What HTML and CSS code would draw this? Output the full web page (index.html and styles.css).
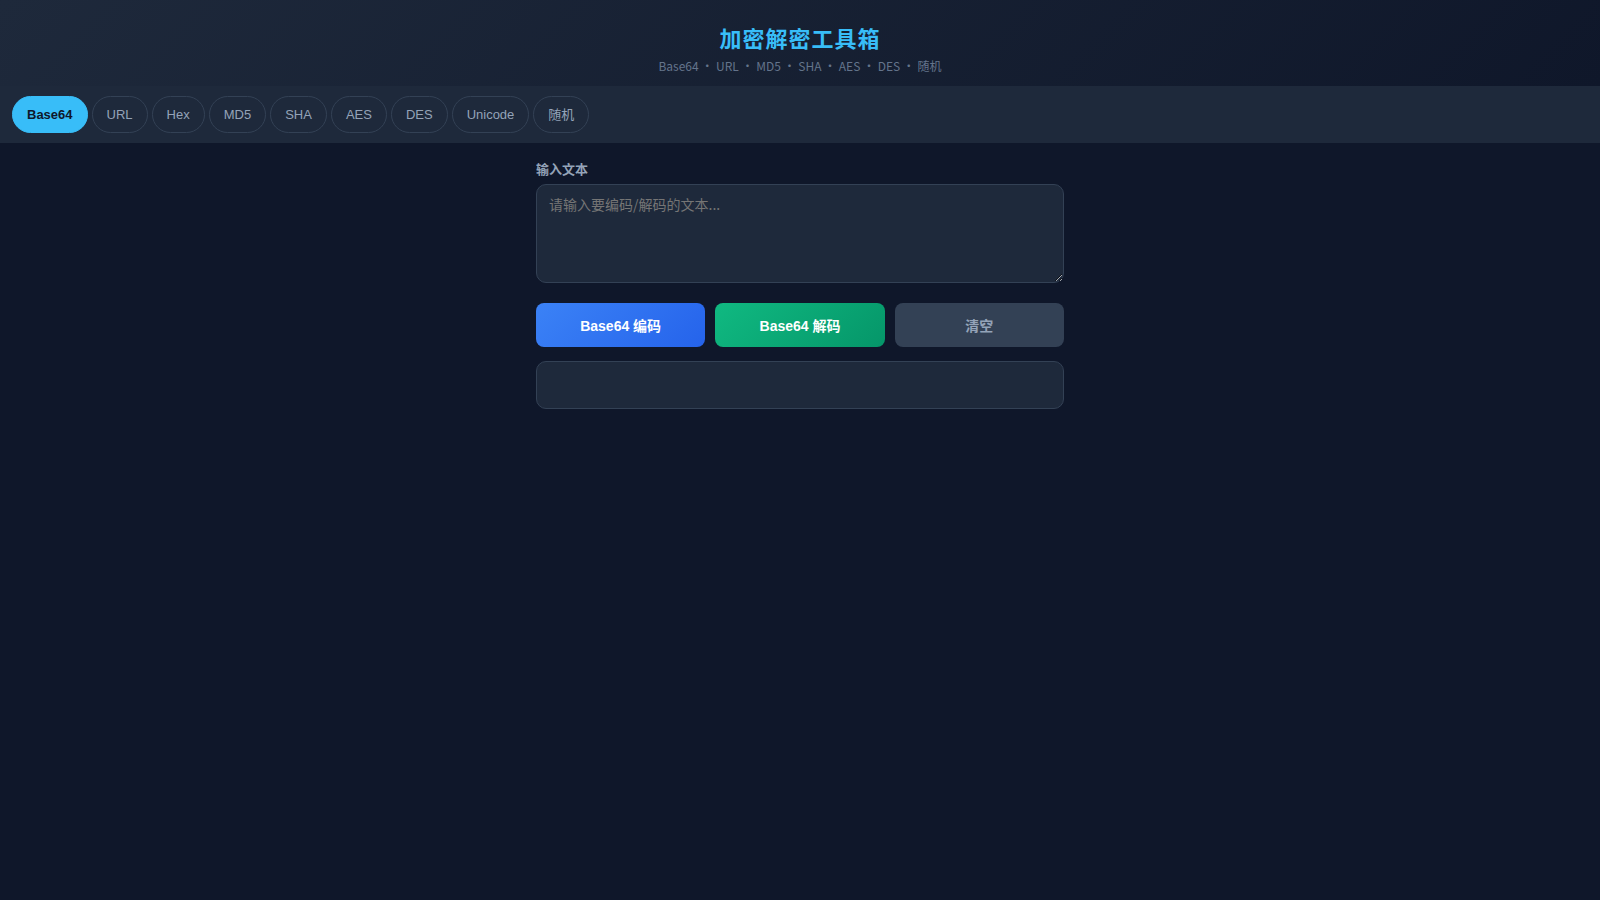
FILE: index.html
```html
<!DOCTYPE html>
<html lang="zh-CN">
<head>
  <meta charset="UTF-8">
  <title>加密解密工具箱</title>
  <meta name="viewport" content="width=device-width, initial-scale=1.0">
  <link rel="stylesheet" href="styles.css">
</head>
<body>
  <header>
    <h1>加密解密工具箱</h1>
    <p class="subtitle">Base64 · URL · MD5 · SHA · AES · DES · 随机</p>
  </header>
  <nav class="tabs">
    <button class="tab active">Base64</button>
    <button class="tab">URL</button>
    <button class="tab">Hex</button>
    <button class="tab">MD5</button>
    <button class="tab">SHA</button>
    <button class="tab">AES</button>
    <button class="tab">DES</button>
    <button class="tab">Unicode</button>
    <button class="tab">随机</button>
  </nav>
  <main>
    <div class="panel">
      <label class="field-label" for="input">输入文本</label>
      <textarea id="input" placeholder="请输入要编码/解码的文本..."></textarea>
      <div class="actions">
        <button class="btn btn-encode">Base64 编码</button>
        <button class="btn btn-decode">Base64 解码</button>
        <button class="btn btn-clear">清空</button>
      </div>
      <div class="output" id="output"></div>
    </div>
  </main>
</body>
</html>
```
FILE: styles.css
```css
* {
  box-sizing: border-box;
}

html, body {
  margin: 0;
  padding: 0;
  min-height: 100%;
}

body {
  background: #0f172a;
  color: #e2e8f0;
  font-family: "Noto Sans CJK SC", "Noto Sans", sans-serif;
  min-height: 100vh;
}

header {
  background: linear-gradient(135deg, #1e293b, #0f172a);
  padding: 23px 0 11px;
  text-align: center;
}

h1 {
  margin: 0 0 6px;
  font-size: 22px;
  line-height: 28px;
  letter-spacing: 1px;
  color: #38bdf8;
  font-weight: 700;
}

.subtitle {
  margin: 0;
  font-size: 12px;
  line-height: 18px;
  color: #64748b;
}

.tabs {
  display: flex;
  gap: 4px;
  background: #1e293b;
  padding: 10px 12px;
}

.tab {
  font-family: "Liberation Sans", "Noto Sans CJK SC", sans-serif;
  font-size: 13px;
  line-height: 15px;
  padding: 10px 14px;
  background: transparent;
  color: #94a3b8;
  border: 1px solid #334155;
  border-radius: 20px;
  cursor: pointer;
}

.tab.active {
  background: #38bdf8;
  border-color: #38bdf8;
  color: #0f172a;
  font-weight: 700;
}

main {
  padding: 17px 16px;
}

.panel {
  max-width: 528px;
  margin: 0 auto;
}

.field-label {
  display: block;
  font-size: 13px;
  line-height: 18px;
  font-weight: 700;
  color: #94a3b8;
  margin-bottom: 6px;
}

textarea {
  display: block;
  width: 100%;
  height: 99px;
  padding: 9px 12px;
  background: #1e293b;
  border: 1px solid #334155;
  border-radius: 10px;
  color: #e2e8f0;
  font-family: "Noto Sans CJK SC", sans-serif;
  font-size: 14px;
  line-height: 20px;
  resize: vertical;
  outline: none;
}

.actions {
  display: grid;
  grid-template-columns: repeat(3, 1fr);
  gap: 10px;
  margin-top: 20px;
}

.btn {
  height: 44px;
  border: none;
  border-radius: 8px;
  font-family: "Liberation Sans", "Noto Sans CJK SC", sans-serif;
  font-size: 14px;
  font-weight: 700;
  color: #fff;
  cursor: pointer;
}

.btn-encode {
  background: linear-gradient(135deg, #3b82f6, #2563eb);
}

.btn-decode {
  background: linear-gradient(135deg, #10b981, #059669);
}

.btn-clear {
  background: #334155;
  color: #94a3b8;
}

.output {
  margin-top: 14px;
  min-height: 48px;
  background: #1e293b;
  border: 1px solid #334155;
  border-radius: 10px;
  padding: 12px;
}
```
